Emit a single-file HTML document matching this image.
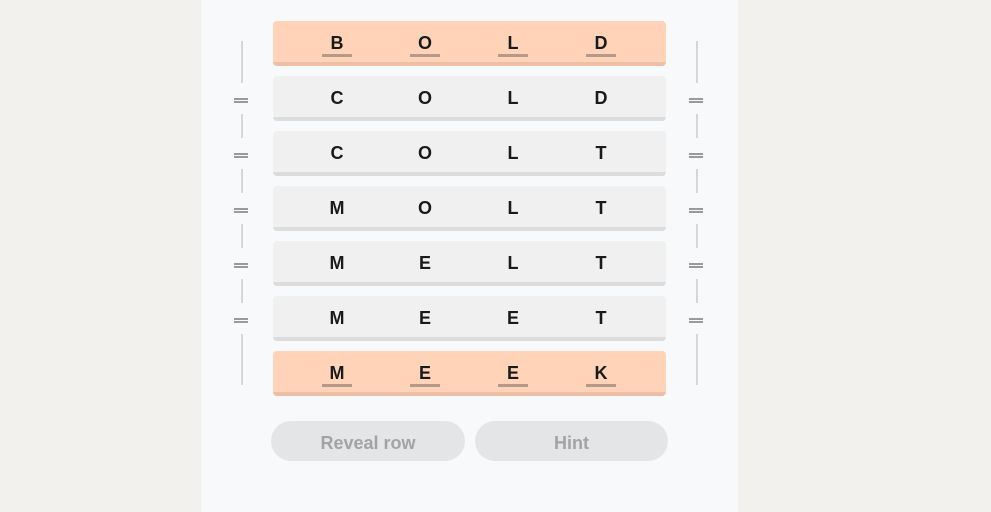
<!DOCTYPE html><html><head><style>
body{margin:0;width:991px;height:512px;background:#f2f1ed;position:relative;overflow:hidden;font-family:"Liberation Sans","DejaVu Sans",sans-serif}
.panel{position:absolute;left:201px;top:0;width:537px;height:512px;background:#f8f9fa}
.row{position:absolute;left:273px;width:393px;height:41px;border-bottom:4px solid #dcdcdc;background:#f0f0f0;border-radius:4px}
.row.o{background:#ffd3b8;border-bottom-color:#ecbfa6}
.l{position:absolute;top:0;width:40px;margin-left:-20px;text-align:center;line-height:44px;font-size:18px;font-weight:bold;color:#1a1a1a}
.u{position:absolute;top:33px;width:30px;margin-left:-15px;height:3px;background:#b59a8c}
.v{position:absolute;width:2px;background:#d6d6d6}
.eq{position:absolute;width:14px;border-top:2px solid #9a9a9a;border-bottom:2px solid #9a9a9a;box-sizing:border-box;height:5px}
.btn{position:absolute;top:421px;height:40px;border-radius:20px;background:#e4e5e7;color:#a3a3a3;font-size:18px;font-weight:bold;text-align:center;line-height:45px}
</style></head><body>
<div class="panel"></div>
<div id="c"></div>
<div class="btn" style="left:271px;width:194px">Reveal row</div>
<div class="btn" style="left:475px;width:193px">Hint</div>
<script>
var w=["BOLD","COLD","COLT","MOLT","MELT","MEET","MEEK"],h="",xs=[64,152,240,328];
w.forEach(function(s,i){var t=21+55*i,o=(i==0||i==6);h+='<div class="row'+(o?' o':'')+'" style="top:'+t+'px">';
for(var k=0;k<4;k++){h+='<div class="l" style="left:'+xs[k]+'px">'+s[k]+'</div>';if(o)h+='<div class="u" style="left:'+xs[k]+'px"></div>';}h+='</div>';});
[241,696].forEach(function(x){
h+='<div class="v" style="left:'+x+'px;top:41px;height:42px"></div>';
for(var i=0;i<5;i++){var e=99+55*i;h+='<div class="eq" style="left:'+(x-7)+'px;top:'+(e-1)+'px"></div>';
var end=i<4?e+39:385;h+='<div class="v" style="left:'+x+'px;top:'+(e+15)+'px;height:'+(end-e-15)+'px"></div>';}
});
document.getElementById('c').innerHTML=h;
</script>
</body></html>
